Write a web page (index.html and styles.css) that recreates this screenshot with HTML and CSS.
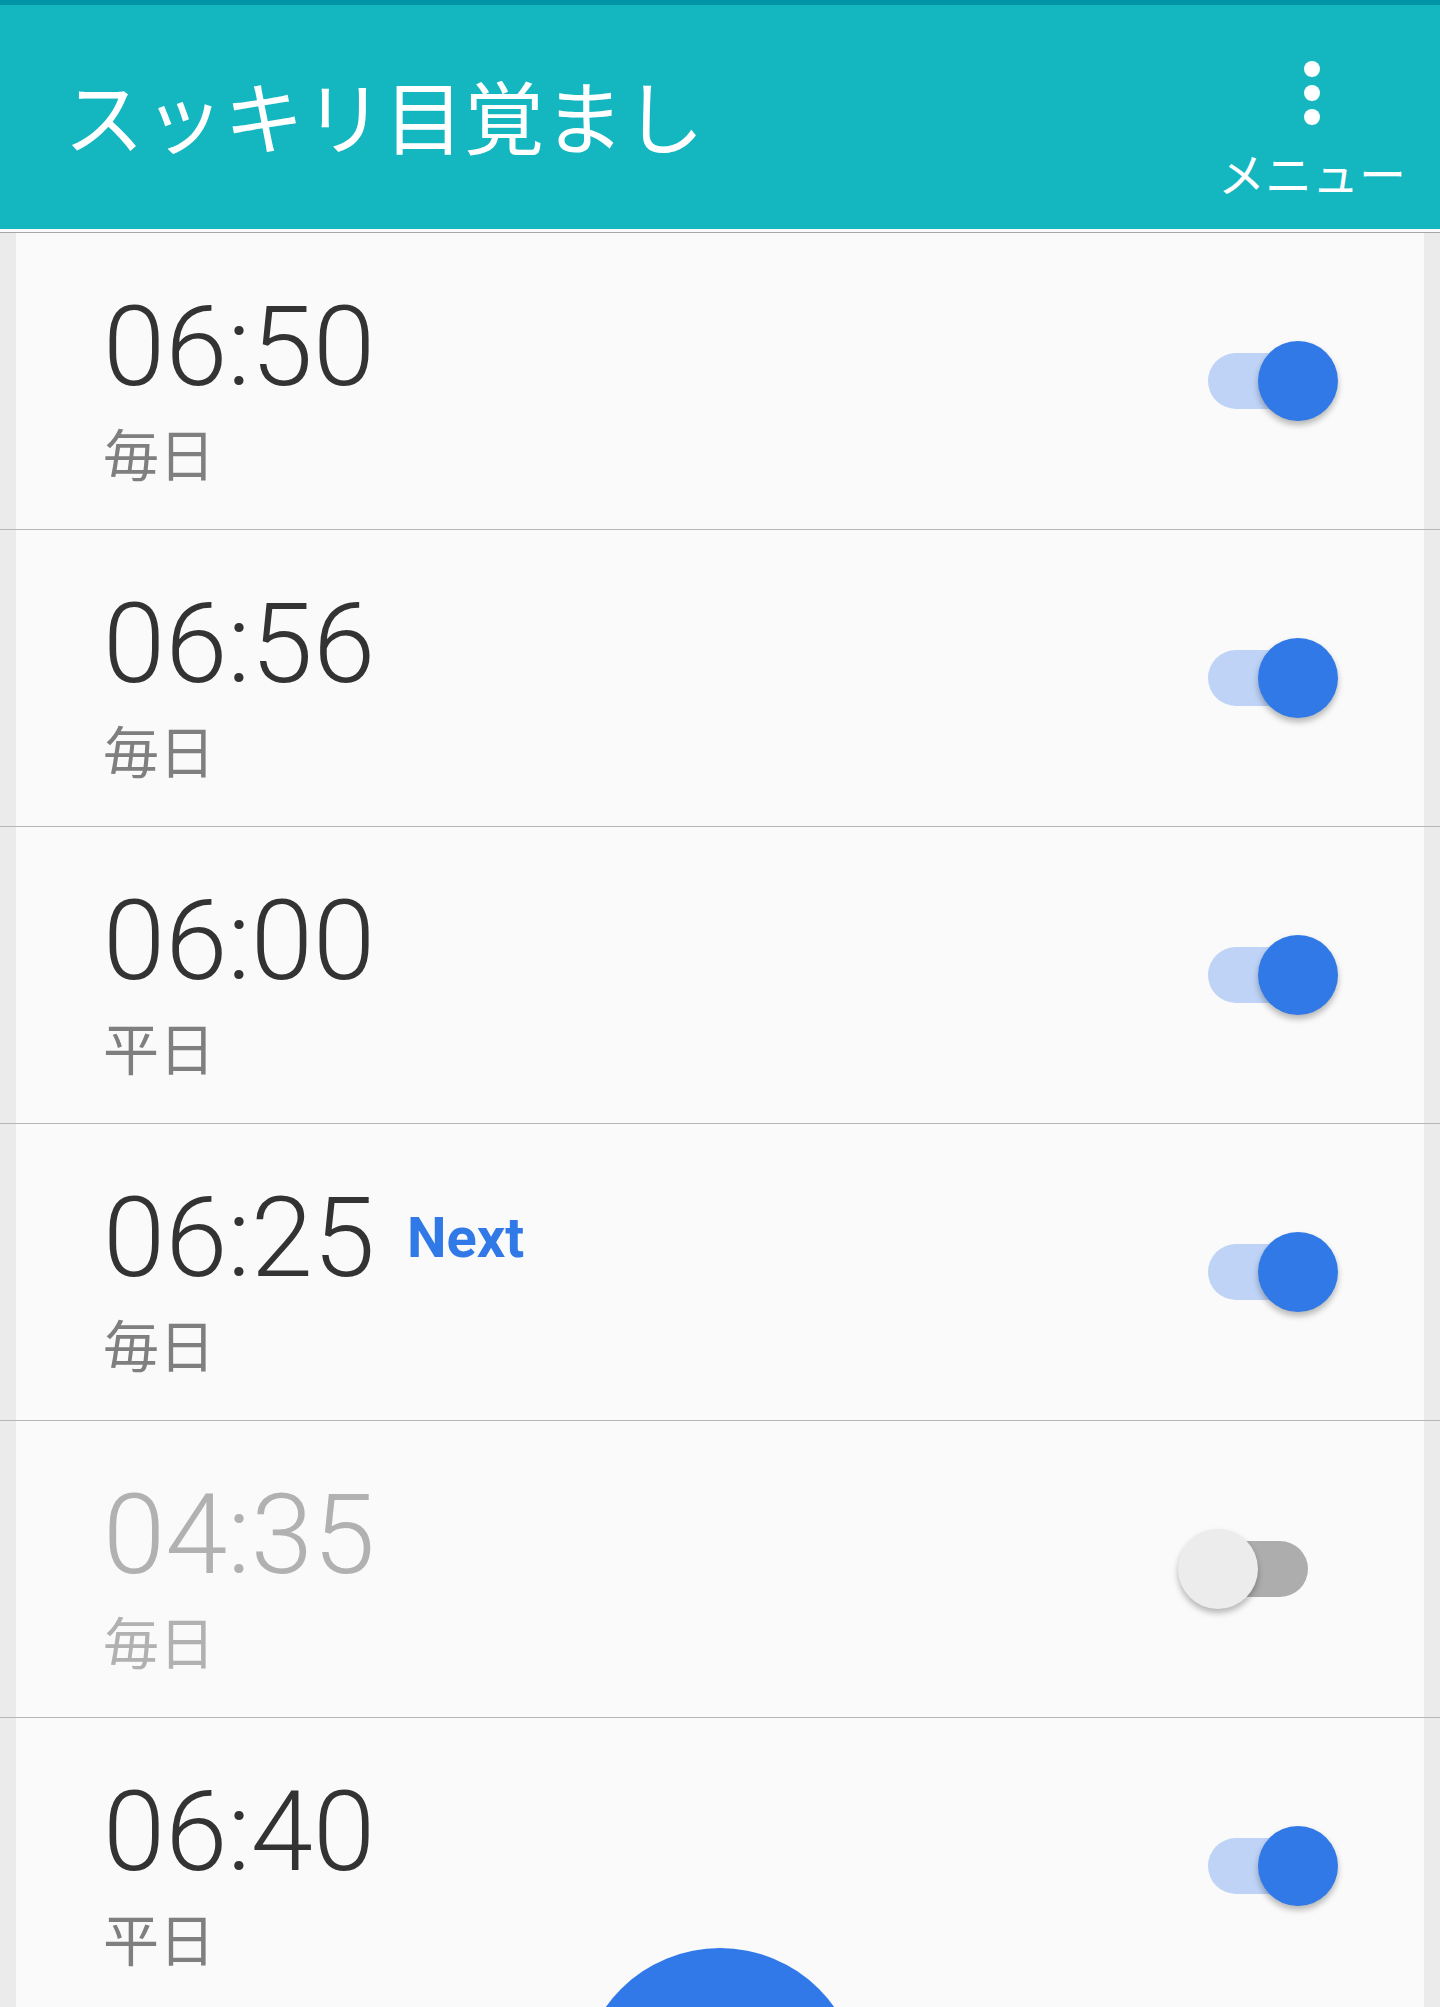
FILE: index.html
```html
<!DOCTYPE html>
<html lang="ja">
<head>
    <meta charset="UTF-8">
    <meta name="viewport" content="width=device-width, initial-scale=1.0">
    <title>スッキリ目覚まし</title>
    <link rel="stylesheet" href="styles.css">
</head>
<body>
    <div class="status-bar"></div>

    <!-- Barra de sus -->
    <header class="app-bar">
        <h1 class="app-title">スッキリ目覚まし</h1>
        <div class="menu">
            <svg class="menu-dots" width="16" height="64" viewBox="0 0 16 64">
                <circle cx="8" cy="8" r="8" fill="#fff"/>
                <circle cx="8" cy="32" r="8" fill="#fff"/>
                <circle cx="8" cy="56" r="8" fill="#fff"/>
            </svg>
            <span class="menu-label">メニュー</span>
        </div>
    </header>

    <div class="alarm-list">
        <div class="alarm">
            <div class="alarm-body">
                <div class="alarm-text">
                    <div class="time-line"><span class="time">06:50</span></div>
                    <div class="days">毎日</div>
                </div>
                <div class="switch on"><span class="thumb"></span></div>
            </div>
        </div>
        <div class="alarm">
            <div class="alarm-body">
                <div class="alarm-text">
                    <div class="time-line"><span class="time">06:56</span></div>
                    <div class="days">毎日</div>
                </div>
                <div class="switch on"><span class="thumb"></span></div>
            </div>
        </div>
        <div class="alarm">
            <div class="alarm-body">
                <div class="alarm-text">
                    <div class="time-line"><span class="time">06:00</span></div>
                    <div class="days">平日</div>
                </div>
                <div class="switch on"><span class="thumb"></span></div>
            </div>
        </div>
        <div class="alarm">
            <div class="alarm-body">
                <div class="alarm-text">
                    <div class="time-line"><span class="time">06:25</span><span class="next">Next</span></div>
                    <div class="days">毎日</div>
                </div>
                <div class="switch on"><span class="thumb"></span></div>
            </div>
        </div>
        <div class="alarm disabled">
            <div class="alarm-body">
                <div class="alarm-text">
                    <div class="time-line"><span class="time">04:35</span></div>
                    <div class="days">毎日</div>
                </div>
                <div class="switch"><span class="thumb"></span></div>
            </div>
        </div>
        <div class="alarm">
            <div class="alarm-body">
                <div class="alarm-text">
                    <div class="time-line"><span class="time">06:40</span></div>
                    <div class="days">平日</div>
                </div>
                <div class="switch on"><span class="thumb"></span></div>
            </div>
        </div>
    </div>

    <!-- Buton de adaugare -->
    <div class="fab"></div>
</body>
</html>
```

FILE: styles.css
```css
body {
    margin: 0;
    padding: 0;
    height: 2007px;
    overflow: hidden;
    position: relative;
    background-color: #fafafa;
    font-family: Roboto, "Noto Sans CJK JP", sans-serif;
}
.status-bar {
    height: 5px;
    background-color: #0094a6;
}
.app-bar {
    height: 224px;
    background-color: #14b6c0;
    display: flex;
    justify-content: space-between;
    align-items: flex-start;
    padding: 0 34px 0 64px;
    border-bottom: 3px solid #fafafa;
}
.app-title {
    margin: 0;
    padding-top: 68px;
    font-family: "Noto Sans CJK JP", sans-serif;
    font-weight: 400;
    font-size: 80px;
    line-height: 80px;
    color: #fff;
}
.menu {
    display: flex;
    flex-direction: column;
    align-items: center;
    padding-top: 56px;
}
.menu-label {
    margin-top: 23px;
    font-family: "Noto Sans CJK JP", sans-serif;
    font-size: 47px;
    line-height: 47px;
    color: #fff;
}
.alarm-list {
    border-top: 1px solid #a6a6a6;
}
.alarm {
    height: 297px;
    box-sizing: border-box;
    padding: 0 16px;
    background-color: #ebebeb;
    border-bottom: 1px solid #b6b6b6;
}
.alarm-body {
    height: 100%;
    background-color: #fafafa;
    display: flex;
    justify-content: space-between;
    align-items: center;
    padding-left: 87px;
    padding-right: 116px;
}
.alarm-text {
    align-self: flex-start;
    padding-top: 58px;
}
.time-line {
    display: flex;
    align-items: center;
}
.time {
    font-size: 112px;
    line-height: 112px;
    font-weight: 300;
    color: #333;
}
.next {
    margin-left: 32px;
    font-size: 56px;
    line-height: 56px;
    font-weight: 700;
    color: #3079e6;
}
.days {
    margin-top: 21px;
    font-family: "Noto Sans CJK JP", sans-serif;
    font-size: 56px;
    line-height: 56px;
    color: #7f7f7f;
}
.disabled .time,
.disabled .days {
    color: #b1b1b1;
}
.switch {
    position: relative;
    width: 100px;
    height: 56px;
    border-radius: 28px;
    background-color: #adadad;
}
.switch.on {
    background-color: #bed3f6;
}
.thumb {
    position: absolute;
    top: -12px;
    left: -30px;
    width: 80px;
    height: 80px;
    border-radius: 50%;
    background-color: #ececec;
    box-shadow: 0 4px 6px rgba(0, 0, 0, 0.28);
}
.switch.on .thumb {
    left: 50px;
    background-color: #3079e6;
}
.fab {
    position: absolute;
    top: 1948px;
    left: 580px;
    width: 280px;
    height: 280px;
    border-radius: 50%;
    background-color: #3179e8;
}
```
